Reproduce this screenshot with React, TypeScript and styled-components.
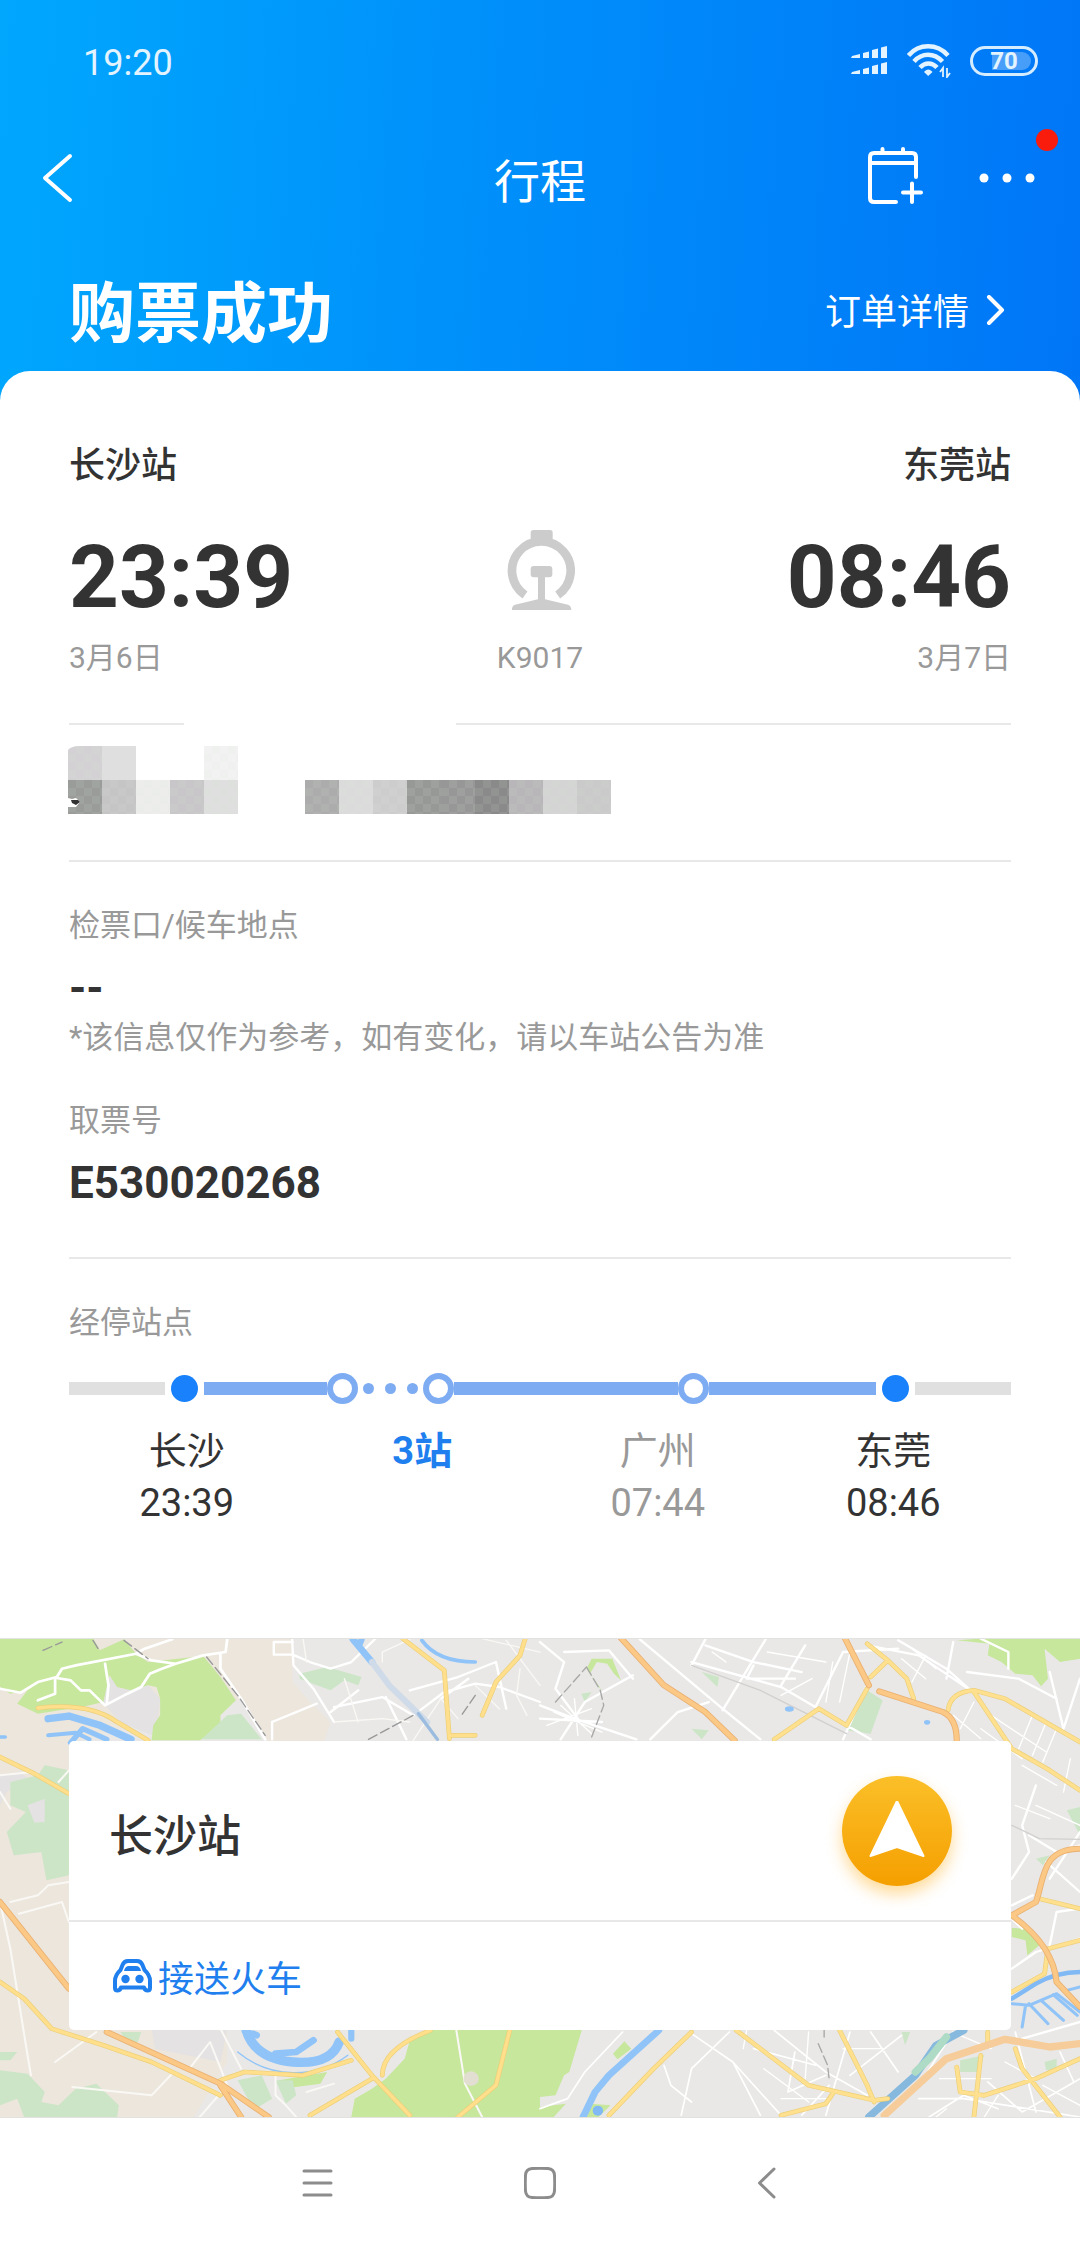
import React from "react";
import styled, { createGlobalStyle, css } from "styled-components";

const GlobalStyle = createGlobalStyle`
  *, *::before, *::after { box-sizing: border-box; }
  body {
    margin: 0;
    background: #fff;
    color: #333;
    font-family: Roboto, "Noto Sans CJK SC", sans-serif;
  }
  h1, h2, p, ol, dl, dd, dt { margin: 0; padding: 0; font-weight: inherit; }
  ol { list-style: none; }
  button { border: 0; padding: 0; background: none; color: inherit; font: inherit; cursor: pointer; }
  a { color: inherit; text-decoration: none; }
  svg { display: block; flex: none; }
`;

const Page = styled.div`
  width: 100%;
`;

/* ---------- header ---------- */

const Header = styled.header`
  padding-bottom: 30px;
  color: #fff;
  background: linear-gradient(94deg, #00a7fd 0%, #008dfa 50%, #0076f7 100%);
`;

const StatusBar = styled.div`
  display: flex;
  align-items: center;
  height: 122px;
  padding: 0 42px 0 83px;
  color: #e3f3ff;
`;

const Clock = styled.time`
  flex: 1;
  padding-top: 4px;
  font-size: 36px;
  line-height: 44px;
`;

const StatusIcons = styled.div`
  display: flex;
  align-items: center;
  gap: 19px;
`;

const Battery = styled.div`
  position: relative;
  display: flex;
  align-items: center;
  justify-content: center;
  width: 68px;
  height: 30px;
  border: 3px solid #d6ecff;
  border-radius: 15px;
  font-size: 24px;
  font-weight: 700;
  line-height: 24px;

  &::before {
    content: "";
    position: absolute;
    inset: 3px 4px 3px 19px;
    border-radius: 0 9px 9px 0;
    background: rgba(255, 255, 255, 0.28);
  }

  span { position: relative; }
`;

const NavBar = styled.div`
  display: grid;
  grid-template-columns: 1fr auto 1fr;
  align-items: center;
  height: 112px;
  padding: 0 41px;
`;

const NavTitle = styled.h1`
  padding-top: 8px;
  font-size: 46px;
  line-height: 56px;
`;

const NavActions = styled.div`
  display: flex;
  align-items: center;
  justify-content: flex-end;
  gap: 56px;
  padding-right: 4px;
`;

const IconButton = styled.button`
  position: relative;
  justify-self: start;
`;

const Alert = styled.span`
  position: absolute;
  top: -44px;
  right: -23px;
  width: 22px;
  height: 22px;
  border-radius: 50%;
  background: #f91b0c;
`;

const Hero = styled.div`
  display: flex;
  align-items: center;
  justify-content: space-between;
  height: 137px;
  padding: 17px 73px 0 69px;
`;

const HeroTitle = styled.h2`
  padding-top: 8px;
  font-size: 66px;
  font-weight: 700;
  line-height: 80px;
`;

const DetailLink = styled.a`
  display: flex;
  align-items: center;
  gap: 16px;
  font-size: 36px;
  line-height: 44px;

  span { padding-top: 4px; }
`;

/* ---------- ticket ---------- */

const Ticket = styled.main`
  position: relative;
  margin-top: -30px;
  padding: 70px 69px 109px;
  border-radius: 30px 30px 0 0;
  background: #fff;
`;

const Trip = styled.section`
  display: grid;
  grid-template-columns: 1fr auto 1fr;
  padding-bottom: 45px;
`;

const Endpoint = styled.div<{ $end?: boolean }>`
  display: flex;
  flex-direction: column;
  text-align: ${(p) => (p.$end ? "right" : "left")};
`;

const StationName = styled.h2`
  font-size: 36px;
  font-weight: 500;
  line-height: 50px;
`;

const BigTime = styled.time`
  margin-top: 36px;
  font-size: 87px;
  font-weight: 700;
  line-height: 100px;
`;

const Muted = styled.span`
  font-size: 30px;
  line-height: 40px;
  color: #999;
`;

const TripDate = styled(Muted)`
  margin-top: 11px;
`;

const Train = styled.div`
  display: flex;
  flex-direction: column;
  align-items: center;
  justify-content: flex-end;
  gap: 28px;
`;

const Rule = styled.div`
  height: 2px;
  background: #e8e8e8;
`;

const BrokenRule = styled.div`
  display: grid;
  grid-template-columns: 115px 1fr;
  gap: 272px;
`;

const Passenger = styled.section`
  display: flex;
  align-items: flex-end;
  gap: 67px;
  padding: 21px 0 46px;
  margin-left: -1px;
`;

const Mosaic = styled.div<{ $cols: number }>`
  position: relative;
  display: grid;
  grid-template-columns: repeat(${(p) => p.$cols}, 34px);
  grid-auto-rows: 34px;
`;

const Tile = styled.span<{ $tone: string; $cut?: boolean }>`
  background-color: ${(p) => p.$tone};
  ${(p) =>
    p.$tone !== "#fff" &&
    css`
      background-image: repeating-conic-gradient(rgba(216, 232, 216, 0.1) 0 25%, transparent 0 50%);
      background-size: 16px 16px;
    `}
  border-radius: ${(p) => (p.$cut ? "12px 4px 0 0 / 5px 0 0 0" : "0")};
`;

const Speck = styled.svg`
  position: absolute;
  left: 0;
  bottom: 7px;
`;

const Info = styled.dl`
  padding: 44px 0 48px;
`;

const InfoItem = styled.div`
  & + & { margin-top: 43px; }
`;

const InfoLabel = styled.dt`
  font-size: 31px;
  line-height: 40px;
  color: #999;
`;

const InfoValue = styled.dd`
  margin-top: 16px;
  font-size: 44px;
  font-weight: 700;
  line-height: 52px;
`;

const InfoNote = styled.dd`
  margin-top: 4px;
  font-size: 31px;
  line-height: 40px;
  color: #999;
`;

const Stops = styled.section`
  padding-top: 44px;
`;

const StopsTitle = styled.h2`
  font-size: 31px;
  line-height: 40px;
  color: #999;
`;

const Track = styled.div`
  display: flex;
  align-items: center;
  height: 31px;
  margin: 30px 0 21px;
`;

const Line = styled.span<{ $grow?: number }>`
  flex: ${(p) => (p.$grow ? `${p.$grow} 1 0` : "0 0 96px")};
  height: 13px;
  background: ${(p) => (p.$grow ? "#7eacf2" : "#e0e0e0")};
`;

const Terminal = styled.span`
  width: 27px;
  height: 27px;
  margin: 0 6px;
  border-radius: 50%;
  background: #1981fc;
`;

const Ring = styled.span`
  width: 31px;
  height: 31px;
  border: 6px solid #7eacf2;
  border-radius: 50%;
`;

const Dots = styled.span`
  display: flex;
  gap: 11px;
  padding: 0 5px;
`;

const Dot = styled.i`
  width: 11px;
  height: 11px;
  border-radius: 50%;
  background: #7eacf2;
`;

const StopList = styled.ol`
  display: grid;
  grid-template-columns: repeat(4, 1fr);
`;

const Stop = styled.li<{ $dim?: boolean }>`
  display: flex;
  flex-direction: column;
  align-items: center;
  font-size: 38px;
  line-height: 52px;
  color: ${(p) => (p.$dim ? "#999" : "#333")};
`;

const MoreStops = styled.button`
  font-weight: 700;
  color: #1f7fee;
`;

/* ---------- map ---------- */

const MapArea = styled.section`
  position: relative;
  padding: 103px 69px 88px;
  background: #e9e8e6;
`;

const MapArt = styled.svg`
  position: absolute;
  inset: 0;
  width: 100%;
  height: 100%;
  border: solid #e2e2e0;
  border-width: 1px 0;
`;

const MapCard = styled.div`
  position: relative;
  border-radius: 5px;
  background: #fff;
`;

const MapHead = styled.div`
  display: flex;
  align-items: center;
  justify-content: space-between;
  height: 179px;
  padding: 0 59px 0 40px;
`;

const MapTitle = styled.h2`
  padding-top: 12px;
  font-size: 44px;
  font-weight: 500;
  line-height: 52px;
`;

const Navigate = styled.button`
  display: flex;
  align-items: center;
  justify-content: center;
  width: 110px;
  height: 110px;
  border-radius: 50%;
  background: linear-gradient(#fbbf28, #f59f00);
  box-shadow: 0 8px 16px rgba(255, 166, 0, 0.4);
`;

const RideLink = styled.a`
  display: flex;
  align-items: center;
  gap: 6px;
  height: 108px;
  padding: 0 44px;
  font-size: 36px;
  line-height: 44px;
  color: #1f7fee;

  span { padding-top: 8px; }
`;

/* ---------- system bar ---------- */

const SystemBar = styled.nav`
  display: flex;
  align-items: center;
  justify-content: center;
  gap: 193px;
  height: 129px;
`;

/* ---------- drawings ---------- */

const Signal = () => (
  <svg width="37" height="30" viewBox="0 0 37 30" fill="currentColor" aria-hidden="true">
    <path d="M0 12 1 10 9 8V12zM12 7 18 5.500V12H12zM21 4 27 2.500V12H21zM30 1.500 36 0V12H30z" />
    <path d="M0 28 1 26 9 24V28zM12 23 18 21.500V28H12zM21 20 27 18.500V28H21zM30 17.500 36 16V28H30z" />
  </svg>
);

const Wifi = () => (
  <svg width="44" height="34" viewBox="0 0 44 34" fill="none" stroke="currentColor" strokeWidth="4.500" aria-hidden="true">
    <path d="M1.500 11.500C12-.7 30-.7 41 11.500" />
    <path d="M7 17.500C15 8.500 27 8.500 35.500 17.500" />
    <path d="M13 23.500C18 18 25 18 30 23.500" />
    <path d="M17 28C19.500 24.600 23 24.600 25.500 28L21.200 32z" fill="currentColor" stroke="none" />
    <path d="M36 33V24L33 28M40 24V33L43 29" strokeWidth="1.800" />
  </svg>
);

const ChevronLeft = () => (
  <svg width="33" height="50" viewBox="0 0 33 50" fill="none" stroke="#fff" strokeWidth="4" strokeLinecap="round" strokeLinejoin="round" aria-hidden="true">
    <path d="M29 3 4 25 29 47" />
  </svg>
);

const ChevronRight = () => (
  <svg width="22" height="32" viewBox="0 0 22 32" fill="none" stroke="#fff" strokeWidth="4" strokeLinecap="round" strokeLinejoin="round" aria-hidden="true">
    <path d="M4 2 17 15 4 28" />
  </svg>
);

const CalendarPlus = () => (
  <svg width="55" height="62" viewBox="0 0 55 62" fill="none" stroke="#fff" strokeWidth="4" strokeLinecap="round" strokeLinejoin="round" aria-hidden="true">
    <path d="M28 55H6Q2 55 2 51V10Q2 6 6 6H44Q48 6 48 10V30M2 16H48M14.500 2V6M35 2V6M35 45.500H53M44 36.500V55" />
  </svg>
);

const More = () => (
  <svg width="56" height="10" viewBox="0 0 56 10" fill="#fff" aria-hidden="true">
    <circle cx="5" cy="5" r="4.500" />
    <circle cx="28" cy="5" r="4.500" />
    <circle cx="51" cy="5" r="4.500" />
  </svg>
);

const RailwayLogo = () => (
  <svg width="71" height="80" viewBox="30 40 213 240" fill="#ccc" aria-hidden="true">
    <path d="M93 235A88 88 0 1 1 191 235" fill="none" stroke="#ccc" strokeWidth="26" />
    <rect x="110" y="40" width="66" height="44" rx="8" />
    <rect x="110" y="148" width="65" height="34" rx="9" />
    <path d="M132 178H153V248L222 264Q232 268 232 280H54Q53 268 63 264L132 248z" />
  </svg>
);

const Car = () => (
  <svg width="39" height="34" viewBox="0 0 39 34" fill="none" stroke="currentColor" strokeWidth="4" strokeLinejoin="round" aria-hidden="true">
    <path d="M7.500 11 9.500 6Q11 2 15 2H24Q28 2 29.500 6L31.500 11Q37 16 37 22V29Q37 31.500 34.500 31.500 32 31.500 31 28.500H8Q7 31.500 4.500 31.500 2 31.500 2 29V22Q2 16 7.500 11z" />
    <path d="M11 12Q12 7 16 7H23Q27 7 28 12z" fill="currentColor" stroke="none" />
    <circle cx="12.500" cy="20" r="4.200" fill="currentColor" stroke="none" />
    <circle cx="26.500" cy="20" r="4.200" fill="currentColor" stroke="none" />
  </svg>
);

const Arrow = () => (
  <svg width="56" height="60" viewBox="0 0 56 60" fill="#fff" stroke="#fff" strokeWidth="2" strokeLinejoin="round" aria-hidden="true">
    <path d="M28 0 54.500 55 28 46 1.500 55z" />
  </svg>
);

const road = { fill: "none", strokeLinejoin: "round" as const, strokeLinecap: "round" as const };

const MapDrawing = () => (
  <MapArt viewBox="0 0 1080 480" preserveAspectRatio="xMidYMid slice" aria-hidden="true">
    {/* west half */}
    <g transform="translate(0 -19.300) scale(.3444 .3333)">
      <path fill="#ece6dc" d="M0 50H850V190L900 250 960 310 940 370H780L700 240 200 370V1130L300 1230H660V1330L560 1500H0z" />
      <path fill="#e4e2e2" d="M310 165 350 210 430 200 465 240 460 290 440 350 350 310 300 255zM0 470 60 460 80 480 20 520 0 560zM440 1230H660L640 1330 450 1290z" />
      <path fill="#c6e79c" d="M0 58H270L290 95 360 62 395 105 430 130 590 112 640 175 685 245 640 290 640 330 580 365H440L445 320 465 290 465 240 455 205 430 200 380 215 340 205 318 170 300 250 250 262 110 285 50 255 80 215 30 225 0 205z" />
      <path fill="#c6e79c" d="M1250 1232H1568V1495H1020L1030 1440 1080 1410 1120 1380 1175 1320 1190 1265zM810 1385 950 1360 930 1395 820 1410z" />
      <g fill="#cbe5c6">
        <path d="M585 362 660 290 700 285 760 362zM870 165 950 145 1050 175 1040 200 1000 185 960 215 920 200 870 180z" />
        <path d="M30 490 110 470 130 440 200 455V770L135 785 120 700 40 710 20 640 75 580 30 560z" />
        <path d="M0 1355 80 1365 130 1420 120 1450 170 1460 220 1410 280 1395 345 1460 340 1495H70L50 1440 0 1460zM690 1385 760 1370 790 1440 750 1465 720 1440zM0 1300H50L30 1325H0zM350 1240H410L400 1270H370zM800 1385H850L860 1430 830 1455z" />
      </g>
      <path fill="#e4e2e2" d="M80 560 130 540V610L100 612z" />
      <g {...road} stroke="#fff" strokeWidth="8">
        <path d="M0 210 60 222 110 190 165 175 180 150 220 140 395 105 420 90 500 62M395 105 440 125 510 135 590 110 655 100 660 60M640 105V150L700 240 770 362M165 178 205 185 235 215 260 215 305 260 370 225 410 205 435 165 470 150 510 135M305 135 315 200 310 255M160 180V225L110 245" />
        <path d="M848 58 852 140 910 210 970 310M795 70H850M795 70V108H850M855 110 900 130 960 150 1020 130 1090 60M970 265 1110 235 1200 290 1290 220 1380 195 1450 205 1568 250M960 280 1040 215M790 310 920 255M790 362V310M1120 235 1180 362M1280 240 1360 180M1440 130 1470 270M1190 215 1330 175 1440 130" strokeWidth="7" />
      </g>
      <g {...road} stroke="#faf8f5" strokeWidth="6">
        <path d="M0 470 95 460M200 455 170 490M30 850 110 830 140 800 200 790M55 885 180 850 200 910M0 850 30 990 80 1310 90 1370M160 1330 280 1240M210 1405 440 1430 500 1365M640 1230 700 1350M550 1350 610 1270 660 1400 580 1495M800 1360V1430L830 1460 860 1495M890 1420 970 1395M1325 1235 1350 1395 1400 1495M0 520 30 570" />
        <path d="M880 60 890 130M1000 180 1040 310M970 310 1110 300 1190 310M1470 65 1568 200M1400 60 1568 100M1110 130V100L1190 62M1200 365 1280 240 1330 300M1510 150 1500 230 1530 290M1380 200 1450 270" strokeWidth="4" />
      </g>
      <circle cx="1368" cy="1380" r="22" fill="#e2dfd2" />
      <g {...road} stroke="#90c4f8">
        <path d="M140 300 200 292 290 320 380 362" strokeWidth="22" />
        <path d="M140 350 220 342 260 362" strokeWidth="12" />
        <path d="M205 372 240 330 310 362" strokeWidth="16" />
        <path d="M0 355H15M1225 65Q1270 130 1380 130" strokeWidth="11" />
        <path d="M1025 62 1080 130" strokeWidth="20" />
        <path d="M715 1235Q740 1320 850 1330T985 1270" strokeWidth="28" />
        <path d="M800 1305 860 1300 910 1265M735 1245 745 1250" strokeWidth="20" />
        <path d="M690 1300Q760 1360 850 1362T1010 1310" strokeWidth="4" />
        <path d="M1050 62 1045 75M1020 1235V1260" strokeWidth="18" />
      </g>
      <path {...road} stroke="#cfdbe8" strokeWidth="18" d="M1080 130 1130 200 1190 260 1240 310" />
      <path {...road} stroke="#9bbcdf" strokeWidth="10" d="M1215 285 1270 362" />
      <g {...road} stroke="#999" strokeWidth="4">
        <path d="M360 65 430 120M600 115 690 230 770 350M125 95 180 70M270 65 285 90M1070 362 1200 290M1380 230 1340 290" strokeDasharray="28 12" />
      </g>
      <g {...road}>
        <path stroke="#edcf78" strokeWidth="14" d="M110 268Q260 250 340 310L430 365M0 415 100 465 200 525M0 1090 70 1140 150 1230 300 1280 440 1330 640 1430M640 1385 710 1360 880 1370 1020 1325M900 1490 1080 1380M980 1240 1080 1370 1190 1490M1110 1370Q1110 1290 1250 1235M1480 1235 1440 1400 1330 1495M1170 60 1290 155 1305 360M1525 60 1510 110 1440 190 1400 290M1310 350H1380" />
        <path stroke="#ffdf8c" strokeWidth="10" d="M110 268Q260 250 340 310L430 365M0 415 100 465 200 525M0 1090 70 1140 150 1230 300 1280 440 1330 640 1430M640 1385 710 1360 880 1370 1020 1325M900 1490 1080 1380M980 1240 1080 1370 1190 1490M1110 1370Q1110 1290 1250 1235M1480 1235 1440 1400 1330 1495M1170 60 1290 155 1305 360M1525 60 1510 110 1440 190 1400 290M1310 350H1380" />
        <path stroke="#e9b072" strokeWidth="18" d="M0 850 200 1110M310 1240 640 1395 780 1495M640 1400 700 1495" />
        <path stroke="#fbc885" strokeWidth="13" d="M0 850 200 1110M310 1240 640 1395 780 1495M640 1400 700 1495" />
      </g>
    </g>

    {/* east half */}
    <g transform="translate(540 -19.300) scale(.3444 .3333)">
      <path fill="#c6e79c" d="M1210 65 1300 58H1568V120L1510 130 1465 90 1475 180 1455 203 1430 170 1380 165 1340 130 1300 110 1305 75zM0 1232H122L85 1360 70 1370 45 1430 0 1435zM0 1465 75 1455 40 1495H0zM135 150 150 120 210 120 235 185 215 165 195 135 165 130 145 165 180 215 170 205zM1370 928 1420 930 1450 980 1415 1010 1410 965 1370 955zM245 1268 265 1290 225 1322 212 1305zM145 1455 205 1460 170 1495H130z" />
      <path fill="#cbe5c6" d="M945 212 995 245 960 345 890 335zM470 160 520 175 515 205zM1530 575 1568 565V650zM120 225 150 220 130 250zM440 330 490 335 470 362zM1440 720 1480 710 1460 740zM1465 1330 1500 1320V1355H1470zM1220 1325 1290 1310 1270 1360H1220zM1050 1240 1075 1240 1060 1280z" />
      <g {...road} stroke="#fff" strokeWidth="7">
        <path d="M290 62 530 270 640 362M655 62 530 275M320 362 400 280 490 250M0 260 100 300 280 362M440 130 700 205 960 362M440 140 480 62M480 80 620 130 760 160M880 362 950 200M950 80 1100 110 1250 215M1040 65 1180 150 1250 215M0 70 70 130 45 210 110 300M0 300 180 310M60 362 130 250 270 170M70 100 200 95 270 180M800 265 880 100 1040 90M700 200 770 80M620 140 600 180 740 180M1180 180 1200 70M1360 150V100L1280 60M1240 160 1390 180 1500 240M1480 160 1520 330 1568 180M1370 780 1420 700 1400 620 1440 500M1420 650 1500 700 1568 680M1370 1050 1440 1000 1568 960M1480 980 1500 880 1568 870M1370 860 1430 830M1470 730 1568 820M1370 900 1400 930M1400 1260 1568 1210M1480 780 1568 640" />
        <path d="M0 1470 80 1440 130 1360 240 1240M410 1490 440 1350 550 1240M440 1245 560 1330 640 1490M680 1235 830 1360 950 1430M560 1330 700 1490M620 1290 800 1340M900 1240 830 1490M740 1300 720 1420 830 1370M1050 1250 900 1370M840 1400 760 1490M1130 1495 1230 1430 1330 1470M1200 1240 1100 1400M1300 1390 1400 1480 1568 1380M1100 1440 1230 1440 1568 1495M1440 1480 1380 1240M1510 1300 1550 1390M960 1240 1040 1360M360 1340 380 1400 440 1450" strokeWidth="5" />
        <path d="M500 100 540 130M660 100 830 130M700 230 790 180M850 130 830 250M900 100 870 250M1050 120 1120 180M1080 90 1150 150M1120 110 1080 190M1280 330 1400 420M1310 290 1470 400M1430 290 1390 390M1470 310 1430 410M1500 330 1460 430M1540 420 1520 520M1400 440 1500 500M1440 560 1568 620M1380 560 1480 600M1200 290 1280 360M1260 250 1220 330M600 1235 590 1290M650 1350 780 1450M780 1240 770 1380M700 1440 830 1440M880 1290 990 1290M1160 1380 1310 1380M1220 1250 1310 1290M1350 1330 1440 1380M1460 1400 1568 1460M1330 1430 1290 1495M1180 1470 1150 1495M20 320 150 270M60 260 150 345M100 240 110 350M40 280 180 340" strokeWidth="4" />
      </g>
      <g {...road} stroke="#a8a8a8" strokeWidth="4">
        <path d="M45 250 135 145M135 145 175 215 185 260 150 355M825 1235V1255M808 1275 835 1340 840 1385" strokeDasharray="28 12" />
        <path d="M440 140 640 215 890 345M1370 620 1450 660 1568 662" stroke="#d2d0cf" />
      </g>
      <g {...road} stroke="#80b9f3">
        <path d="M345 1235 200 1370 160 1420 125 1495" stroke="#90c4f8" strokeWidth="20" />
        <path d="M1370 1140 1440 1095Q1500 1060 1568 1060" strokeWidth="13" />
        <path d="M1370 1155 1420 1160 1500 1125 1568 1180M1410 1160 1400 1225M1420 1155 1475 1215M1455 1145 1520 1205M1490 1128 1560 1190M1530 1115 1568 1105" stroke="#90c4f8" strokeWidth="9" />
        <path d="M955 1495 1090 1370 1150 1280 1230 1235" stroke="#86b9dd" strokeWidth="22" />
      </g>
      <path {...road} stroke="#aedbc6" strokeWidth="22" d="M1090 1360 1130 1320 1180 1255" />
      <circle cx="168" cy="1476" r="15" fill="#80b9f3" />
      <ellipse cx="724" cy="271" rx="13" ry="8" fill="#90c4f8" />
      <ellipse cx="1124" cy="311" rx="9" ry="7" fill="#90c4f8" />
      <g {...road}>
        <path stroke="#edcf78" strokeWidth="14" d="M950 75 1010 125 1065 180 1085 240M1010 125 960 175M950 210 890 320 810 270 680 362M1185 275Q1190 220 1260 215L1350 240 1568 370M1260 220 1370 390 1480 455 1568 515M1450 840 1568 870M1370 1120 1465 1065 1475 990 1568 965M440 1240 330 1350 200 1490M570 1235 780 1400 970 1445 1010 1440M870 1235 950 1400 970 1450M700 1490 830 1455 850 1425M1210 1345 1220 1420 1290 1430 1440 1380 1568 1320M1280 1310 1260 1495M1380 1290 1400 1350 1510 1495M1300 1240V1270" />
        <path stroke="#ffe08f" strokeWidth="10" d="M950 75 1010 125 1065 180 1085 240M1010 125 960 175M950 210 890 320 810 270 680 362M1185 275Q1190 220 1260 215L1350 240 1568 370M1260 220 1370 390 1480 455 1568 515M1450 840 1568 870M1370 1120 1465 1065 1475 990 1568 965M440 1240 330 1350 200 1490M570 1235 780 1400 970 1445 1010 1440M870 1235 950 1400 970 1450M700 1490 830 1455 850 1425M1210 1345 1220 1420 1290 1430 1440 1380 1568 1320M1280 1310 1260 1495M1380 1290 1400 1350 1510 1495M1300 1240V1270" />
        <path stroke="#e9b072" strokeWidth="18" d="M235 58 360 200 480 280 565 365M885 58 955 200M985 218 1170 280Q1210 300 1210 365M1370 890 1440 850C1465 780 1455 690 1568 690M1370 890Q1490 980 1500 1090L1568 1165" />
        <path stroke="#fbc885" strokeWidth="13" d="M235 58 360 200 480 280 565 365M885 58 955 200M985 218 1170 280Q1210 300 1210 365M1370 890 1440 850C1465 780 1455 690 1568 690M1370 890Q1490 980 1500 1090L1568 1165" />
        <path stroke="#f6cd9a" strokeWidth="22" d="M1000 1490 1180 1320 1350 1262 1480 1285 1568 1275" />
      </g>
    </g>
  </MapArt>
);

/* ---------- data ---------- */

const nameTiles = ["#d3d1d3", "#dfdfdf", "#fff", "#fff", "#f2f2f2", "#9a9c9a", "#c5c5c5", "#ededec", "#c8c6c8", "#dedfde"];
const idTiles = ["#acacac", "#dbdbdb", "#cecdce", "#979997", "#979797", "#8a8a8a", "#b8b6b8", "#d4d4d4", "#cacaca"];

export default function App() {
  return (
    <Page>
      <GlobalStyle />
      <Header>
        <StatusBar>
          <Clock>19:20</Clock>
          <StatusIcons>
            <Signal />
            <Wifi />
            <Battery><span>70</span></Battery>
          </StatusIcons>
        </StatusBar>
        <NavBar>
          <IconButton aria-label="返回"><ChevronLeft /></IconButton>
          <NavTitle>行程</NavTitle>
          <NavActions>
            <IconButton aria-label="添加到日历"><CalendarPlus /></IconButton>
            <IconButton aria-label="更多"><More /><Alert /></IconButton>
          </NavActions>
        </NavBar>
        <Hero>
          <HeroTitle>购票成功</HeroTitle>
          <DetailLink href="#order"><span>订单详情</span><ChevronRight /></DetailLink>
        </Hero>
      </Header>

      <Ticket>
        <Trip>
          <Endpoint>
            <StationName>长沙站</StationName>
            <BigTime>23:39</BigTime>
            <TripDate>3月6日</TripDate>
          </Endpoint>
          <Train>
            <RailwayLogo />
            <Muted>K9017</Muted>
          </Train>
          <Endpoint $end>
            <StationName>东莞站</StationName>
            <BigTime>08:46</BigTime>
            <TripDate>3月7日</TripDate>
          </Endpoint>
        </Trip>

        <BrokenRule><Rule /><Rule /></BrokenRule>
        <Passenger>
          <Mosaic $cols={5}>
            {nameTiles.map((tone, i) => <Tile key={i} $tone={tone} $cut={i === 0} />)}
            <Speck width="13" height="9" viewBox="0 0 13 9" aria-hidden="true">
              <path d="M0 0 4 1 8 0 12 4 8 9H0z" fill="#fff" />
              <path d="M3 2H10L12 4 8 7 4 5z" fill="#333" />
            </Speck>
          </Mosaic>
          <Mosaic $cols={9}>
            {idTiles.map((tone, i) => <Tile key={i} $tone={tone} />)}
          </Mosaic>
        </Passenger>
        <Rule />

        <Info>
          <InfoItem>
            <InfoLabel>检票口/候车地点</InfoLabel>
            <InfoValue>--</InfoValue>
            <InfoNote>*该信息仅作为参考，如有变化，请以车站公告为准</InfoNote>
          </InfoItem>
          <InfoItem>
            <InfoLabel>取票号</InfoLabel>
            <InfoValue>E530020268</InfoValue>
          </InfoItem>
        </Info>
        <Rule />

        <Stops>
          <StopsTitle>经停站点</StopsTitle>
          <Track>
            <Line />
            <Terminal />
            <Line $grow={124} />
            <Ring />
            <Dots><Dot /><Dot /><Dot /></Dots>
            <Ring />
            <Line $grow={225} />
            <Ring />
            <Line $grow={168} />
            <Terminal />
            <Line />
          </Track>
          <StopList>
            <Stop><span>长沙</span><time>23:39</time></Stop>
            <Stop><MoreStops>3站</MoreStops></Stop>
            <Stop $dim><span>广州</span><time>07:44</time></Stop>
            <Stop><span>东莞</span><time>08:46</time></Stop>
          </StopList>
        </Stops>
      </Ticket>

      <MapArea>
        <MapDrawing />
        <MapCard>
          <MapHead>
            <MapTitle>长沙站</MapTitle>
            <Navigate aria-label="导航"><Arrow /></Navigate>
          </MapHead>
          <Rule />
          <RideLink href="#ride"><Car /><span>接送火车</span></RideLink>
        </MapCard>
      </MapArea>

      <SystemBar>
        <IconButton aria-label="最近任务">
          <svg width="32" height="32" viewBox="0 0 32 32" overflow="visible" stroke="#8c8c8c" strokeWidth="3" strokeLinecap="round" aria-hidden="true">
            <path d="M5 4H32M5 16H32M5 28H32" />
          </svg>
        </IconButton>
        <IconButton aria-label="主屏幕">
          <svg width="32" height="32" viewBox="0 0 32 32" fill="none" stroke="#8c8c8c" strokeWidth="3" aria-hidden="true">
            <path d="M8 1.500Q16 1 24 1.500 30 2 30.500 8 31 16 30.500 24 30 30 24 30.500 16 31 8 30.500 2 30 1.500 24 1 16 1.500 8 2 2 8 1.500z" />
          </svg>
        </IconButton>
        <IconButton aria-label="后退">
          <svg width="32" height="32" viewBox="0 0 32 32" fill="none" stroke="#8c8c8c" strokeWidth="3" strokeLinecap="round" strokeLinejoin="round" aria-hidden="true">
            <path d="M25 2 10.500 16 25 30" />
          </svg>
        </IconButton>
      </SystemBar>
    </Page>
  );
}
